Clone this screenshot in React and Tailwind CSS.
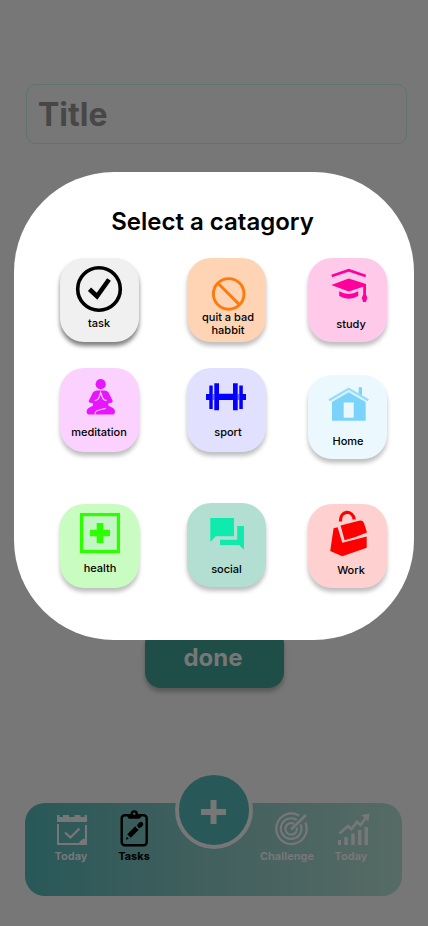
import React from "react";

function TaskIcon() {
  return (
    <svg width="80" height="56" viewBox="0 0 80 56" fill="none" stroke="#000">
      <circle cx="40" cy="31" r="21.3" strokeWidth="3.6" />
      <path d="M30.5 31.3L38 38.3L50 21.5" strokeWidth="4.6" />
    </svg>
  );
}

function QuitIcon() {
  return (
    <svg width="80" height="56" viewBox="0 0 80 56" fill="none" stroke="#ff7a0d" strokeWidth="2.9">
      <circle cx="41.7" cy="35.9" r="15.3" />
      <path d="M31 25.2L52.4 46.6" />
    </svg>
  );
}

function StudyIcon() {
  return (
    <svg width="80" height="56" viewBox="0 0 80 56" fill="#ff009d">
      <path d="M24.7 18L41.7 12.2L58.7 18" fill="none" stroke="#ff009d" strokeWidth="2.6" />
      <path d="M24.3 27L41.7 20.6L59 26V36.5L60.4 40L58.8 44H56.2L54.7 40L56.2 36.5V28.7L41.7 33.6Z" />
      <path d="M32.2 33.3Q41.7 38.6 51.2 33.3V38Q41.7 43.4 32.2 38Z" />
    </svg>
  );
}

function MeditationIcon() {
  return (
    <svg width="80" height="56" viewBox="0 0 80 56" fill="#e815ff">
      <circle cx="41.7" cy="16.2" r="5.1" />
      <path d="M37.5 22.6H46Q49.5 23 50.5 26.5L53.6 32.6Q54 34.5 52.5 34.7L49.3 35.2V37.5L54.3 40.3Q57.6 43.5 54.6 46.4H29Q26 43.5 29.3 40.3L34 37.5V35.2L31 34.7Q29.2 34.5 29.9 32.6L33 26.5Q34 23 37.5 22.6Z" />
      <path d="M35.8 32.6Q39.5 32 40 29.5L41.7 24.5L43.4 29.5Q44 32 47.6 32.6M36 46.4Q36 42.8 40 42L46.8 40.4" fill="none" stroke="#fad1ff" strokeWidth="1.2" />
    </svg>
  );
}

function SportIcon() {
  return (
    <svg width="80" height="56" viewBox="0 0 80 56" fill="#0400ff">
      <path d="M19 26H22.3V17.5H25.7V41H22.3V32H19ZM27.3 15.3H32V25.7H46V15.3H50.7V42.3H46V32H32V42.3H27.3ZM52.3 17.5H55.8V26H59V32H55.8V41H52.3Z" />
      <path d="M25.7 26H27.3V32H25.7ZM50.7 26H52.3V32H50.7Z" fillOpacity="0.5" />
    </svg>
  );
}

function HomeIcon() {
  return (
    <svg width="80" height="56" viewBox="0 0 80 56" fill="#7bd3f9">
      <path d="M51.7 12.3H55V22L51.7 20Z" />
      <path d="M25 27L41.7 17.2L58.7 27V45.7H25Z" />
      <path d="M22 25.3L41.7 13.8L61.3 25.3" fill="none" stroke="#96ddfa" strokeWidth="2.4" />
      <path d="M24 26.7L41.7 16.4L59.4 26.7" fill="none" stroke="#c6edfd" strokeWidth="0.8" />
      <path d="M36.7 27.5H46.7V42.7H36.7Z" fill="#ebf9ff" />
    </svg>
  );
}

function HealthIcon() {
  return (
    <svg width="80" height="56" viewBox="0 0 80 56" fill="#2bff00">
      <rect x="22.6" y="10.6" width="36.8" height="36.8" fill="#c4f5c4" stroke="#2bff00" strokeWidth="3.2" />
      <path d="M37.7 19H44.3V25.7H51V32.3H44.3V39H37.7V32.3H31V25.7H37.7Z" />
    </svg>
  );
}

function SocialIcon() {
  return (
    <svg width="80" height="56" viewBox="0 0 80 56" fill="#0febac">
      <path d="M23.3 15H47V33.2H28.8L23.3 39Z" />
      <path d="M50.2 23H57V46.8L52 42H33V36.7H50.2Z" />
    </svg>
  );
}

function WorkIcon() {
  return (
    <svg width="80" height="56" viewBox="0 0 80 56" fill="#ff0000">
      <path d="M33.4 17.5C33 6 45.5 5.5 47.3 15.5" fill="none" stroke="#ff0000" strokeWidth="3.2" />
      <path d="M33.6 21.5L52 16.7Q56.2 16 57.3 20L60 28.6L51 32L47.7 33.2L37.6 36.2Z" />
      <path d="M26.6 24.2L30.6 23.2L35.3 38.7L59.7 32.4V43.7L35.3 52.2L23.2 47Z" />
    </svg>
  );
}

function Card({
  icon,
  color,
  label,
  className = "",
  iconClass = "",
  labelClass = "",
  shadow = "shadow-[0_4px_4px_rgba(0,0,0,0.25)]",
}) {
  return (
    <div className={`flex h-[84px] w-[79px] shrink-0 flex-col rounded-3xl ${shadow} ${color} ${className}`}>
      <div className={iconClass}>{icon}</div>
      <p className={`whitespace-nowrap text-center text-[11px] font-medium leading-[13px] text-black ${labelClass}`}>
        {label}
      </p>
    </div>
  );
}

function CategoryDialog() {
  return (
    <section className="absolute left-[14px] top-[172px] h-[468px] w-[400px] rounded-[100px] bg-white pt-[35px] [&_svg]:max-w-none">
      <h2 className="pr-[3px] text-center text-2xl font-semibold leading-[30px] text-black">Select a catagory</h2>
      <div className="ml-[46px] mt-[21px] flex">
        <Card
          icon={<TaskIcon />}
          color="bg-[#f0f0f0]"
          label="task"
          shadow="shadow-[0_4px_4px_rgba(0,0,0,0.5)]"
          iconClass="-ml-px"
          labelClass="mt-[3px] pr-px"
        />
        <Card
          icon={<QuitIcon />}
          color="bg-[#ffd4b5]"
          label={<>quit a bad<br />habbit</>}
          className="ml-12"
          labelClass="-mt-[3px] pl-[3px]"
        />
        <Card icon={<StudyIcon />} color="bg-[#ffcae9]" label="study" className="ml-[42px]" iconClass="-ml-px" labelClass="mt-1 pl-[7px]" />
      </div>
      <div className="ml-[46px] mt-[26px] flex">
        <Card icon={<MeditationIcon />} color="bg-[#fad1ff]" label="meditation" iconClass="-ml-px" labelClass="mt-0.5 pr-px" />
        <Card icon={<SportIcon />} color="bg-[#e1e1ff]" label="sport" className="ml-12" labelClass="mt-0.5 pl-[3px]" />
        <Card icon={<HomeIcon />} color="bg-[#ebf9ff]" label="Home" className="ml-[42px] mt-[7px]" iconClass="-ml-px" labelClass="mt-1 pl-px" />
      </div>
      <div className="ml-[46px] mt-11 flex">
        <Card icon={<HealthIcon />} color="bg-[#c9fcc0]" label="health" className="mt-px" iconClass="-ml-px" labelClass="mt-0.5 pl-px" />
        <Card icon={<SocialIcon />} color="bg-[#b3dfd2]" label="social" className="ml-12" labelClass="mt-1" />
        <Card icon={<WorkIcon />} color="bg-[#ffd0d0]" label="Work" className="ml-[42px] mt-px" iconClass="-ml-px" labelClass="mt-1 pl-[7px]" />
      </div>
    </section>
  );
}

function CalendarIcon() {
  return (
    <svg width="32" height="36" viewBox="0 0 32 36" fill="none" stroke="#777777">
      <path d="M1 3H3.5V5H7V3H13V5H18.5V3H24.5V5H28.5V3H31V10H1Z" fill="#777777" stroke="none" />
      <path d="M2 12V32H26M30 13V27" strokeWidth="2" />
      <path d="M31 26V33H23.5V29.5L27 27Z" fill="#777777" stroke="none" />
      <path d="M9 20.5L14.5 25.5L23.5 16.5" strokeWidth="2.2" />
    </svg>
  );
}

function ClipboardIcon() {
  return (
    <svg width="32" height="36" viewBox="0 0 32 36" fill="none" stroke="#000">
      <rect x="3.7" y="3.2" width="25" height="30" rx="3" strokeWidth="2.4" />
      <path d="M9.5 2H12.5Q12.5 -1.8 16.2 -1.8Q20 -1.8 20 2H23V4.5Q23 6.8 20.5 6.8H12Q9.5 6.8 9.5 4.5Z" fill="#000" stroke="none" />
      <circle cx="16.2" cy="1.8" r="1.3" fill="#345b59" stroke="none" />
      <path d="M11 24L19 16" strokeWidth="5" />
      <path d="M20.5 14.5L23.5 11.8" strokeWidth="5" strokeLinecap="round" stroke="#345b59" />
      <path d="M21.5 13.5L23 12.2" strokeWidth="4.5" strokeLinecap="round" />
      <path d="M8 27.7L8.8 24.8L10.8 26.8Z" fill="#000" stroke="none" />
    </svg>
  );
}

function TargetIcon() {
  return (
    <svg width="36" height="36" viewBox="0 0 36 36" fill="none" stroke="#777777" strokeWidth="2.2">
      <path d="M26.2 3.7A15.2 15.2 0 1 0 32.3 10.5" />
      <path d="M23.8 8A10.3 10.3 0 1 0 27.5 12.3" />
      <path d="M21 11.8A5.8 5.8 0 1 0 23.8 15.5" />
      <path d="M18 17.5L33 3" strokeWidth="2.6" />
    </svg>
  );
}

function ChartIcon() {
  return (
    <svg width="36" height="36" viewBox="0 0 36 36" fill="#777777">
      <path d="M3 28H6V33H3ZM9.3 25H12.8V33H9.3ZM16.2 21.5H19.7V33H16.2ZM23 18H26.5V33H23ZM29.5 15H33V33H29.5Z" />
      <path d="M4.5 21.5L13 14L16.5 17L22 10L25.5 13L31.5 5" fill="none" stroke="#777777" strokeWidth="2.8" />
      <path d="M26.2 3L34.5 1.5L33.5 9.8Z" />
    </svg>
  );
}

function NavItem({ icon, label, className = "", iconClass = "", active = false }) {
  return (
    <div className={`flex w-16 shrink-0 flex-col items-center ${className}`}>
      <div className={iconClass}>{icon}</div>
      <span className={`mt-[2px] text-[11px] font-bold leading-[13px] ${active ? "text-black" : "text-[#777777]"}`}>
        {label}
      </span>
    </div>
  );
}

export default function App() {
  return (
    <main className="relative flex h-[926px] w-[428px] flex-col overflow-hidden bg-[#777777] pt-[84px] font-['Inter',sans-serif]">
      <div className="ml-[26px] flex h-[60px] w-[381px] items-center rounded-[10px] border border-[#5f746f] pl-[11px] pt-[2px]">
        <span className="text-[32px] font-bold leading-10 text-[#474747]">Title</span>
      </div>

      <button className="ml-[145px] mt-[484px] h-[60px] w-[139px] rounded-2xl bg-[#1f4e48] pr-[3px] text-2xl font-bold text-[#777777] shadow-[0_4px_4px_rgba(0,0,0,0.25)]">
        done
      </button>

      <nav className="relative ml-[25px] mt-[115px] flex h-[93px] w-[377px] rounded-[20px] bg-linear-to-r from-[#285858] via-[#42605e] to-[#566b65] pt-[9px] [&_svg]:overflow-visible">
        <NavItem icon={<CalendarIcon />} label="Today" className="ml-[14px]" iconClass="pl-[2px]" />
        <NavItem icon={<ClipboardIcon />} label="Tasks" active className="-ml-px" />
        <NavItem icon={<TargetIcon />} label="Challenge" className="ml-[89px]" iconClass="pl-[7px]" />
        <NavItem icon={<ChartIcon />} label="Today" iconClass="pl-[3px]" />
        <button className="absolute -top-8 left-[150px] flex size-[78px] items-center justify-center rounded-full border-4 border-[#777777] bg-[#285858]">
          <svg width="26" height="26" viewBox="0 0 26 26" stroke="#777777" strokeWidth="6" className="mt-1">
            <path d="M0 13H25M12.5 1V25" />
          </svg>
        </button>
      </nav>

      <CategoryDialog />
    </main>
  );
}
